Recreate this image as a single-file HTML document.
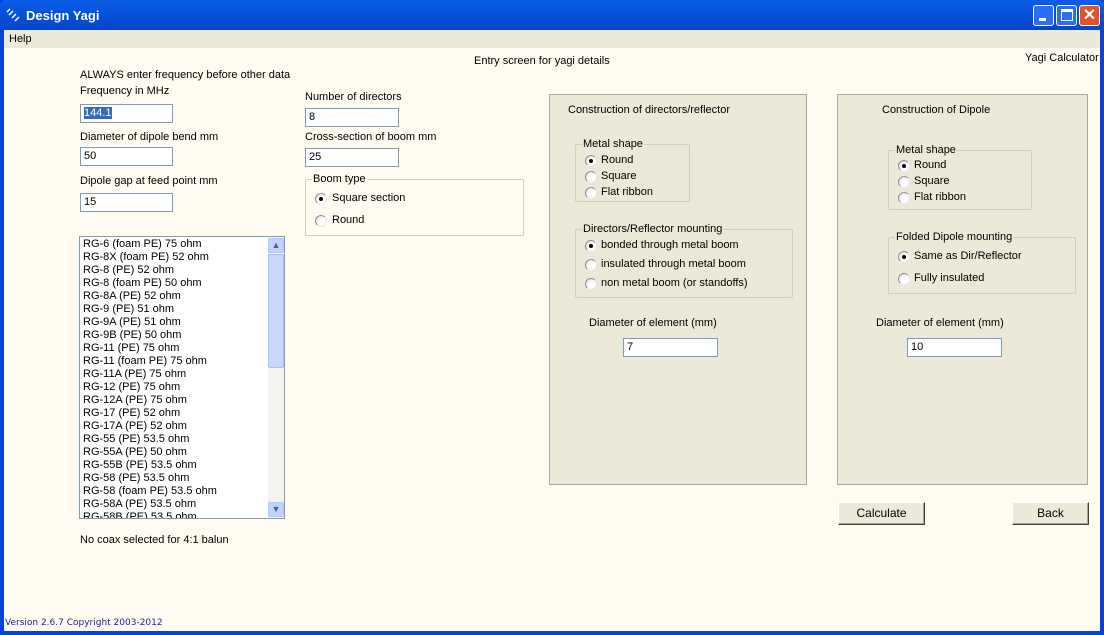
<!DOCTYPE html>
<html><head><style>
*{margin:0;padding:0;box-sizing:border-box}
body{width:1104px;height:635px;overflow:hidden;font-family:"Liberation Sans",sans-serif;font-size:11px;color:#000;background:#0842d6;position:relative}
.a{position:absolute;white-space:nowrap}
.t{position:absolute;white-space:nowrap;line-height:13px}
.in{position:absolute;background:#fff;border:1px solid #7f9db9;height:19px;padding:2px 3px;line-height:13px}
.g{position:absolute;border:1px solid #d0d0bf;border-radius:2px}
.lg{position:absolute;top:-7px;left:6px;background:inherit;padding:0 1px;line-height:13px}
.r{position:absolute;width:12px;height:12px;border-radius:50%;background:radial-gradient(circle at 70% 70%,#fff 40%,#d8d8d0 100%);border:1px solid;border-color:#909090 #e8e8e8 #e8e8e8 #909090}
.r.on::after{content:"";position:absolute;left:3px;top:3px;width:4px;height:4px;border-radius:50%;background:#000}
.btn{position:absolute;background:#ece9d8;border:1px solid;border-color:#fff #404040 #404040 #fff;box-shadow:inset -1px -1px 0 #aca899;text-align:center;font-size:12px;line-height:20px}
.panel{position:absolute;background:#ece9d8;border:1px solid #aca899}
</style></head><body>
<div class="a" style="left:0;top:0;width:1104px;height:30px;background:linear-gradient(#0a5fe6,#0553dc 40%,#0447c8);border-radius:6px 6px 0 0"></div>
<svg class="a" style="left:5px;top:7px" width="18" height="16"><g stroke="#fff" stroke-width="1.5"><line x1="2" y1="5" x2="5" y2="2"/><line x1="4" y1="8" x2="8" y2="4"/><line x1="7" y1="11" x2="11" y2="7"/><line x1="10" y1="14" x2="14" y2="10"/></g></svg>
<div class="a" style="left:26px;top:8px;color:#fff;font-weight:bold;font-size:13px">Design Yagi</div>
<div class="a" style="left:1033px;top:5px;width:21px;height:21px;border:1px solid #fff;border-radius:3px;background:#2a6ff0"><div class="a" style="left:5px;top:12px;width:7px;height:3px;background:#fff"></div></div>
<div class="a" style="left:1056px;top:5px;width:21px;height:21px;border:1px solid #fff;border-radius:3px;background:#2a6ff0"><div class="a" style="left:4px;top:3px;width:12px;height:12px;border:1px solid #fff;border-top:3px solid #fff"></div></div>
<div class="a" style="left:1079px;top:5px;width:21px;height:21px;border:1px solid #fff;border-radius:3px;background:#e0532c;color:#fff;font-size:16px;font-weight:bold;text-align:center;line-height:19px">✕</div>
<div class="a" style="left:4px;top:30px;width:1096px;height:601px;background:#fffbf0"></div>
<div class="a" style="left:4px;top:30px;width:1096px;height:18px;background:#ece9d8"></div>
<div class="t" style="left:9px;top:33px">Help</div>
<div class="t" style="left:474px;top:55px">Entry screen for yagi details</div>
<div class="t" style="left:1025px;top:52px">Yagi Calculator</div>
<div class="t" style="left:80px;top:69px">ALWAYS enter frequency before other data</div>
<div class="t" style="left:80px;top:85px">Frequency in MHz</div>
<div class="in" style="left:80px;top:104px;width:93px"><span style="background:#316ac5;color:#fff">144.1</span></div>
<div class="t" style="left:80px;top:131px">Diameter of dipole bend mm</div>
<div class="in" style="left:80px;top:147px;width:93px">50</div>
<div class="t" style="left:80px;top:175px">Dipole gap at feed point mm</div>
<div class="in" style="left:80px;top:193px;width:93px">15</div>
<div class="t" style="left:305px;top:91px">Number of directors</div>
<div class="in" style="left:305px;top:108px;width:94px">8</div>
<div class="t" style="left:305px;top:131px">Cross-section of boom mm</div>
<div class="in" style="left:305px;top:148px;width:94px">25</div>
<div class="g" style="left:305px;top:179px;width:219px;height:57px;background:#fffbf0"><div class="lg" style="left:6px">Boom type</div>
<div class="r on" style="left:9px;top:13px"></div><div class="t" style="left:26px;top:12px">Square section</div>
<div class="r" style="left:9px;top:35px"></div><div class="t" style="left:26px;top:34px">Round</div></div>
<div class="a" style="left:79px;top:236px;width:206px;height:283px;background:#fff;border:1px solid #7f9db9;overflow:hidden">
<div style="position:absolute;left:3px;top:1px;line-height:13px">RG-6 (foam PE) 75 ohm<br>RG-8X (foam PE) 52 ohm<br>RG-8 (PE) 52 ohm<br>RG-8 (foam PE) 50 ohm<br>RG-8A (PE) 52 ohm<br>RG-9 (PE) 51 ohm<br>RG-9A (PE) 51 ohm<br>RG-9B (PE) 50 ohm<br>RG-11 (PE) 75 ohm<br>RG-11 (foam PE) 75 ohm<br>RG-11A (PE) 75 ohm<br>RG-12 (PE) 75 ohm<br>RG-12A (PE) 75 ohm<br>RG-17 (PE) 52 ohm<br>RG-17A (PE) 52 ohm<br>RG-55 (PE) 53.5 ohm<br>RG-55A (PE) 50 ohm<br>RG-55B (PE) 53.5 ohm<br>RG-58 (PE) 53.5 ohm<br>RG-58 (foam PE) 53.5 ohm<br>RG-58A (PE) 53.5 ohm<br>RG-58B (PE) 53.5 ohm</div>
<div class="a" style="left:188px;top:0;width:16px;height:281px;background:#f4f3ee"></div>
<div class="a" style="left:188px;top:1px;width:16px;height:15px;background:#c1d3fb;border:1px solid #b4c8f6;border-radius:2px;text-align:center;color:#4d6185;font-size:9px;line-height:13px">▲</div>
<div class="a" style="left:188px;top:17px;width:16px;height:114px;background:#c8d8fb;border:1px solid #a8bef0;border-radius:2px"></div>
<div class="a" style="left:188px;top:265px;width:16px;height:15px;background:#c1d3fb;border:1px solid #b4c8f6;border-radius:2px;text-align:center;color:#4d6185;font-size:9px;line-height:13px">▼</div>
</div>
<div class="t" style="left:80px;top:534px">No coax selected for 4:1 balun</div>
<div class="panel" style="left:549px;top:94px;width:258px;height:391px">
<div class="t" style="left:18px;top:9px">Construction of directors/reflector</div>
<div class="g" style="left:25px;top:49px;width:115px;height:58px;background:#ece9d8"><div class="lg">Metal shape</div>
<div class="r on" style="left:9px;top:10px"></div><div class="t" style="left:25px;top:9px">Round</div>
<div class="r" style="left:9px;top:26px"></div><div class="t" style="left:25px;top:25px">Square</div>
<div class="r" style="left:9px;top:42px"></div><div class="t" style="left:25px;top:41px">Flat ribbon</div></div>
<div class="g" style="left:25px;top:134px;width:218px;height:69px;background:#ece9d8"><div class="lg">Directors/Reflector mounting</div>
<div class="r on" style="left:9px;top:10px"></div><div class="t" style="left:25px;top:9px">bonded through metal boom</div>
<div class="r" style="left:9px;top:29px"></div><div class="t" style="left:25px;top:28px">insulated through metal boom</div>
<div class="r" style="left:9px;top:48px"></div><div class="t" style="left:25px;top:47px">non metal boom (or standoffs)</div></div>
<div class="t" style="left:39px;top:222px">Diameter of element (mm)</div>
<div class="in" style="left:73px;top:243px;width:95px">7</div>
</div>
<div class="panel" style="left:837px;top:94px;width:251px;height:391px">
<div class="t" style="left:44px;top:9px">Construction of Dipole</div>
<div class="g" style="left:50px;top:55px;width:144px;height:60px;background:#ece9d8"><div class="lg">Metal shape</div>
<div class="r on" style="left:9px;top:9px"></div><div class="t" style="left:25px;top:8px">Round</div>
<div class="r" style="left:9px;top:25px"></div><div class="t" style="left:25px;top:24px">Square</div>
<div class="r" style="left:9px;top:41px"></div><div class="t" style="left:25px;top:40px">Flat ribbon</div></div>
<div class="g" style="left:50px;top:142px;width:188px;height:57px;background:#ece9d8"><div class="lg">Folded Dipole mounting</div>
<div class="r on" style="left:9px;top:13px"></div><div class="t" style="left:25px;top:12px">Same as Dir/Reflector</div>
<div class="r" style="left:9px;top:35px"></div><div class="t" style="left:25px;top:34px">Fully insulated</div></div>
<div class="t" style="left:38px;top:222px">Diameter of element (mm)</div>
<div class="in" style="left:69px;top:243px;width:95px">10</div>
</div>
<div class="btn" style="left:838px;top:502px;width:87px;height:23px">Calculate</div>
<div class="btn" style="left:1012px;top:502px;width:77px;height:23px">Back</div>
<div class="a" style="left:5px;top:618px;color:#2020a0;font-family:'DejaVu Sans',sans-serif;font-size:9px">Version 2.6.7 Copyright 2003-2012</div>
</body></html>
